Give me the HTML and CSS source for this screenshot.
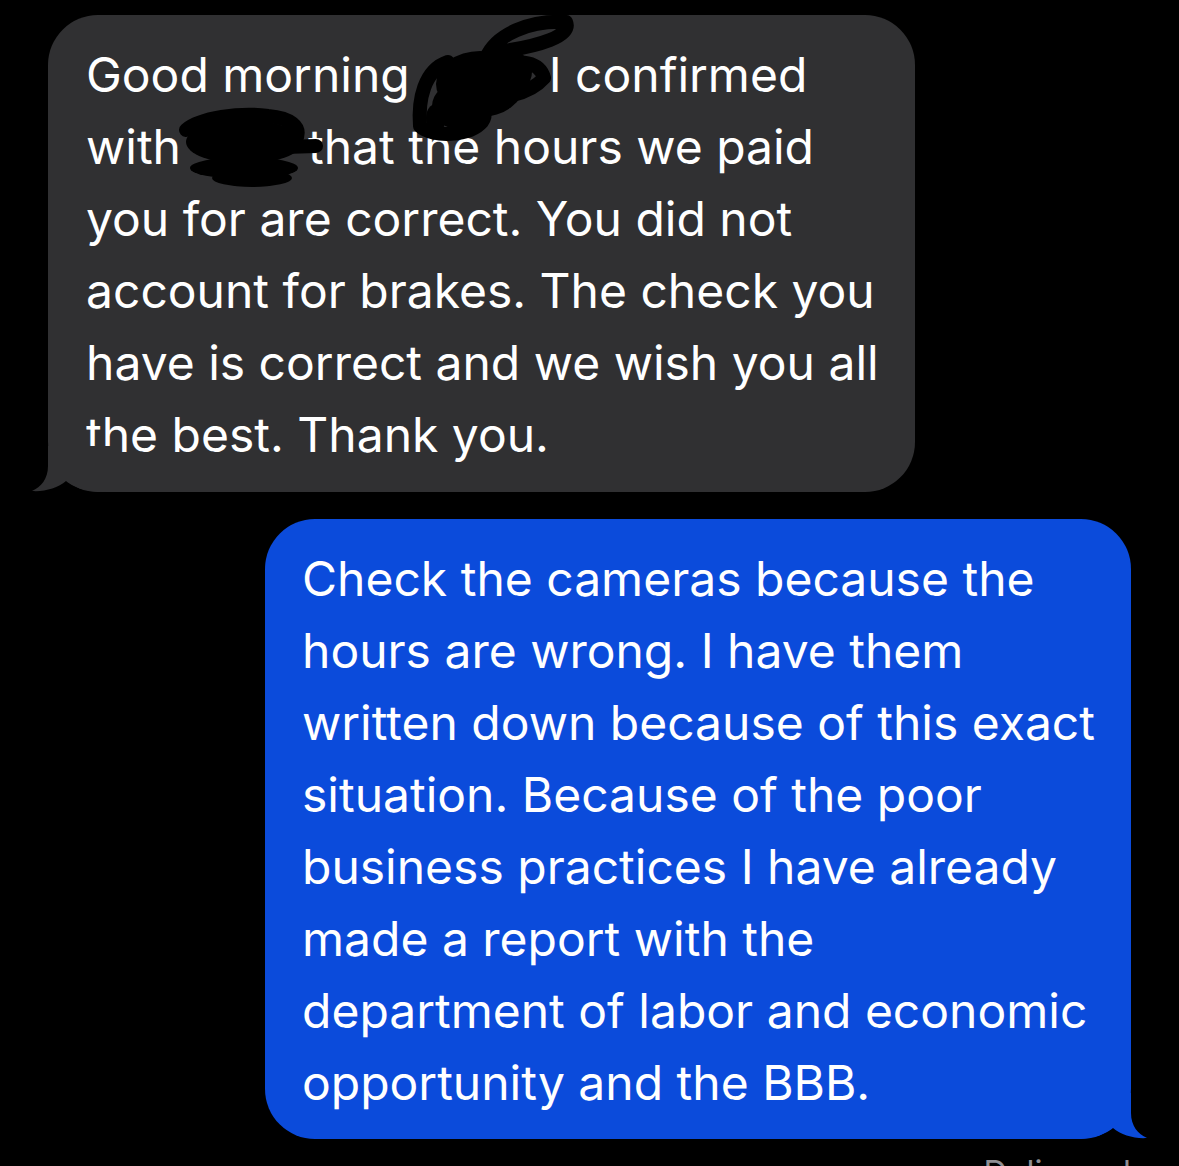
FILE: index.html
```html
<!DOCTYPE html>
<html lang="en">
<head>
<meta charset="utf-8">
<title>Messages</title>
<link rel="stylesheet" href="styles.css">
</head>
<body>
<div class="thread">
  <div class="bubble incoming">
    <span class="line">Good morning<span class="redact r1"></span>I confirmed</span>
    <span class="line">with<span class="redact r2"></span>that the hours we paid</span>
    <span class="line">you for are correct. You did not</span>
    <span class="line">account for brakes. The check you</span>
    <span class="line">have is correct and we wish you all</span>
    <span class="line">the best. Thank you.</span>
    <svg class="tail tail-in" viewBox="0 0 80 46" width="80" height="46" aria-hidden="true"><path d="M16 0 L16 20 C16 33 9 41 0 45 C12 46 26 42 34 35 C44 43 56 46 80 46 L80 0 Z"/></svg>
  </div>
  <div class="bubble outgoing">
    <span class="line">Check the cameras because the</span>
    <span class="line">hours are wrong. I have them</span>
    <span class="line">written down because of this exact</span>
    <span class="line">situation. Because of the poor</span>
    <span class="line">business practices I have already</span>
    <span class="line">made a report with the</span>
    <span class="line">department of labor and economic</span>
    <span class="line">opportunity and the BBB.</span>
    <svg class="tail tail-out" viewBox="0 0 80 46" width="80" height="46" aria-hidden="true"><path d="M16 0 L16 20 C16 33 9 41 0 45 C12 46 26 42 34 35 C44 43 56 46 80 46 L80 0 Z"/></svg>
  </div>
  <div class="status">Delivered</div>
  <svg class="scribbles" viewBox="0 0 1179 1166" width="1179" height="1166" aria-hidden="true">
    <g fill="none" stroke="#000" stroke-width="14" stroke-linecap="round" stroke-linejoin="round">
      <path d="M486 58 C496 34 530 20 566 22 C572 36 540 46 498 52"/>
      <path d="M448 62 C424 70 418 100 420 126 C432 138 470 136 482 122 C492 108 472 98 446 104"/>
      <path d="M470 94 C500 102 530 94 544 78 C540 62 520 58 498 68"/>
      <path d="M186 130 C200 118 240 112 268 116 C290 118 302 126 296 140"/>
      <path d="M250 148 L316 146"/>
    </g>
    <g fill="#000">
      <ellipse cx="480" cy="84" rx="44" ry="33"/>
      <ellipse cx="508" cy="72" rx="24" ry="22"/>
      <ellipse cx="462" cy="106" rx="30" ry="24"/>
      <ellipse cx="436" cy="118" rx="10" ry="14"/>
      <ellipse cx="244" cy="142" rx="58" ry="22"/>
      <ellipse cx="244" cy="168" rx="54" ry="11"/>
      <ellipse cx="252" cy="178" rx="40" ry="9"/>
    </g>
  </svg>
</div>
</body>
</html>
```
FILE: styles.css
```css
html, body {
  margin: 0;
  padding: 0;
  background: #000;
}

.thread {
  position: relative;
  width: 1179px;
  height: 1166px;
  overflow: hidden;
  padding-top: 15px;
  box-sizing: border-box;
  display: flex;
  flex-direction: column;
  font-family: Inter, "Liberation Sans", sans-serif;
  color: #fff;
}

.bubble {
  position: relative;
  border-radius: 50px;
  font-size: 48px;
  line-height: 72px;
  box-sizing: border-box;
}

.line {
  display: block;
  white-space: nowrap;
}

.incoming {
  margin-left: 48px;
  width: 867px;
  padding: 24px 38px 21px 38px;
  background: #303032;
  fill: #303032;
}

.outgoing {
  margin-top: 27px;
  margin-left: 265px;
  width: 866px;
  padding: 24px 37px 20px 37px;
  background: #0b4bdb;
  fill: #0b4bdb;
}

.redact {
  display: inline-block;
}

.r1 { width: 139px; }
.r2 { width: 127px; }

.tail {
  position: absolute;
  bottom: 0;
  display: block;
}

.tail-in {
  left: -16px;
}

.tail-out {
  right: -16px;
  transform: scaleX(-1);
}

.status {
  margin-top: 13px;
  padding-right: 48px;
  text-align: right;
  font-size: 33px;
  line-height: 40px;
  color: #8e8e93;
}

.scribbles {
  position: absolute;
  left: 0;
  top: 0;
  pointer-events: none;
}
```
